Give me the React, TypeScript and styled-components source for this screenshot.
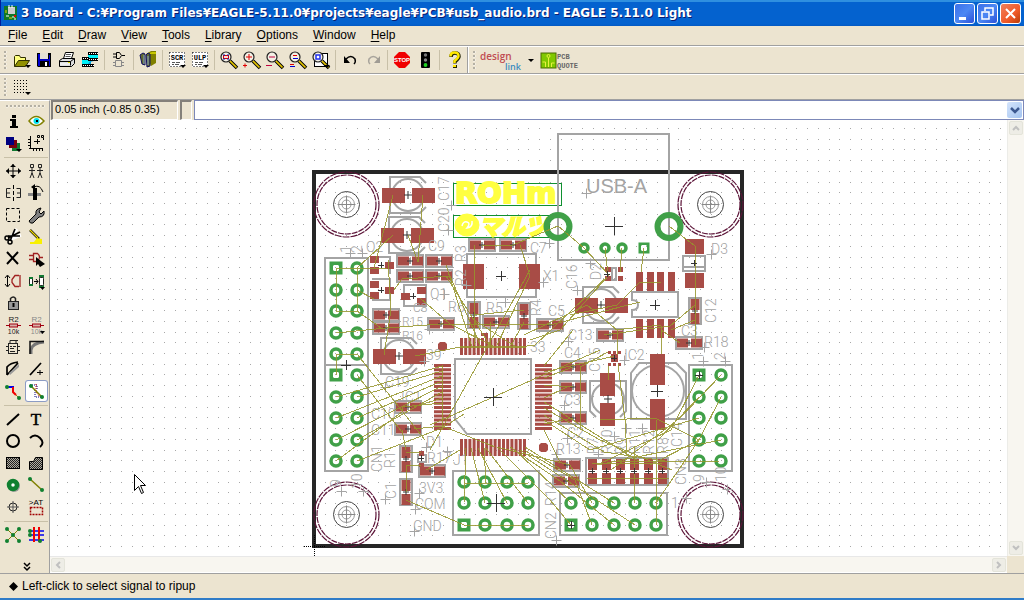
import React from "react";
import styled, { createGlobalStyle, css } from "styled-components";

const GlobalStyle = createGlobalStyle`
  *, *::before, *::after { box-sizing: border-box; }
  html, body, #root { margin: 0; height: 100%; }
  body { font-family: "Liberation Sans", Arial, sans-serif; font-size: 12px; color: #000; overflow: hidden; }
  button, input { font: inherit; color: inherit; }
`;

const face = "#ece4d0";
const edge = "#a0a0a0";

const Window = styled.div`
  display: flex;
  flex-direction: column;
  height: 100%;
  background: ${face};
  border-bottom: 2px solid #2f7cc8;
`;

const TitleBar = styled.header`
  display: flex;
  align-items: center;
  flex: none;
  height: 26px;
  padding: 0 3px 0 3px;
  background: linear-gradient(#2f8fe0 0, #2f8fe0 2px, #0462cf 2px, #0462cf 24px, #0459c2 26px);
  border-left: 1px solid #001c9c;
`;

const Title = styled.h1`
  flex: 1;
  margin: 0 0 0 3px;
  overflow: hidden;
  white-space: nowrap;
  font: bold 12px/20px "DejaVu Sans", Verdana, sans-serif;
  color: #fff;
  text-shadow: 1px 1px 0 #0a1c70;
`;

const WindowButtons = styled.div`
  display: flex;
  gap: 2px;
`;

const WindowButton = styled.button<{ $close?: boolean }>`
  width: 21px;
  height: 21px;
  padding: 0;
  border: 1px solid #fff;
  border-radius: 3px;
  background: ${(p) =>
    p.$close
      ? "linear-gradient(135deg, #f0805c, #f05a28 60%, #b83c08)"
      : "linear-gradient(135deg, #3c70e8, #4c88f4 50%, #2c50d8)"};
  svg { display: block; }
`;

const MenuBar = styled.nav`
  display: flex;
  flex: none;
  gap: 15px;
  height: 20px;
  padding: 0 8px;
  border-bottom: 1px solid ${edge};
`;

const MenuItem = styled.button`
  height: 18px;
  padding: 0;
  border: 0;
  background: none;
  line-height: 18px;
  u { text-underline-offset: 2px; }
`;

const ToolBar = styled.div<{ $height: number }>`
  display: flex;
  align-items: center;
  flex: none;
  height: ${(p) => p.$height}px;
  border-top: 1px solid #fff;
  border-bottom: 1px solid ${edge};
`;

const Grip = styled.div<{ $wide?: boolean }>`
  flex: none;
  background-image: radial-gradient(circle at 1px 1px, #b4b0a4 1px, #fff 1px, transparent 2px);
  background-size: 4px 4px;
  ${(p) =>
    p.$wide
      ? css`width: 39px; height: 3px; margin: 4px 0 2px 6px;`
      : css`width: 3px; height: 18px; margin: 0 3px 0 4px;`}
`;

const ToolButton = styled.button<{ $active?: boolean; $width?: number }>`
  flex: none;
  width: ${(p) => p.$width ?? 23}px;
  height: 22px;
  padding: 0;
  border: 0;
  border-radius: 3px;
  background: ${(p) => (p.$active ? "#fff" : "none")};
  box-shadow: ${(p) => (p.$active ? "inset 0 0 0 1px #8c9cc4" : "none")};
  svg { display: block; }
`;

const Separator = styled.div<{ $horizontal?: boolean }>`
  flex: none;
  ${(p) =>
    p.$horizontal
      ? css`grid-column: 1 / -1; height: 1px; margin: 3px 0 2px 2px; background: #c8c0a8;`
      : css`width: 1px; height: 20px; margin: 0 3px 0 2px; background: #c8c0a8;`}
`;

const BarDivider = styled.div`
  align-self: stretch;
  width: 2px;
  margin-left: 1px;
  background: ${edge};
  border-right: 1px solid #fff;
`;

const Workspace = styled.main`
  display: flex;
  flex: 1;
  min-height: 0;
  border-bottom: 1px solid ${edge};
`;

const ToolBox = styled.aside`
  display: flex;
  flex-direction: column;
  flex: none;
  width: 50px;
  border-top: 1px solid #fff;
  border-right: 1px solid ${edge};
`;

const ToolGrid = styled.div`
  display: grid;
  grid-template-columns: 23px 23px;
  padding-left: 2px;
`;

const MoreButton = styled.button`
  width: 20px;
  height: 12px;
  margin: auto 0 0 16px;
  padding: 0;
  border: 0;
  background: none;
  svg { display: block; margin: auto; }
`;

const Editor = styled.section`
  display: flex;
  flex-direction: column;
  flex: 1;
  min-width: 0;
`;

const CommandRow = styled.div`
  display: flex;
  flex: none;
  height: 20px;
  gap: 2px;
  padding-left: 1px;
`;

const Readout = styled.output<{ $width: number }>`
  flex: none;
  width: ${(p) => p.$width}px;
  padding-left: 2px;
  line-height: 15px;
  font-size: 11px;
  border: 1px solid #fff;
  border-top: 2px solid #84807a;
  border-left: 2px solid #84807a;
  white-space: nowrap;
`;

const CommandBox = styled.div`
  display: flex;
  flex: 1;
  min-width: 0;
  border: 1px solid #7c88b8;
  background: #fff;
`;

const CommandInput = styled.input`
  flex: 1;
  min-width: 0;
  padding: 0 4px;
  border: 0;
  outline: 0;
  background: transparent;
`;

const DropButton = styled.button`
  width: 15px;
  margin: 1px;
  padding: 0;
  border: 0;
  border-radius: 2px;
  background: linear-gradient(135deg, #d4e4fc, #a4c4f0);
  svg { display: block; margin: auto; }
`;

const CanvasRow = styled.div`
  display: flex;
  flex: 1;
  min-height: 0;
`;

const Canvas = styled.div`
  flex: 1;
  min-width: 0;
  overflow: hidden;
  background: #fff;
  > svg { display: block; width: 100%; height: 100%; }
`;

const ScrollTrack = styled.div<{ $vertical?: boolean }>`
  display: flex;
  flex: none;
  justify-content: space-between;
  background: #f8f6f0;
  ${(p) =>
    p.$vertical
      ? css`flex-direction: column; width: 17px; padding: 1px; border-left: 1px solid #ecece8;`
      : css`height: 17px; margin-right: 17px; padding: 1px; border-top: 1px solid #e8e8e8; border-bottom: 1px solid #fff;`}
`;

const ScrollButton = styled.button`
  width: 14px;
  height: 14px;
  padding: 0;
  border: 1px solid #e4e4da;
  border-radius: 2px;
  background: #eeede6;
  svg { display: block; }
`;

const StatusBar = styled.footer`
  display: flex;
  align-items: center;
  flex: none;
  gap: 4px;
  height: 24px;
  padding-left: 9px;
`;

/* ---------- tool icons, each drawn in a 23 x 22 box ---------- */

const DropMark = () => <path d="M14 16h6l-3 3z" fill="#000" />;

const Lens = () => (
  <>
    <path d="M12 12l7 7" stroke="#000" strokeWidth="3.500" />
    <path d="M12 12l6.500 6.500" stroke="#e8c800" strokeWidth="1.700" />
    <circle cx="8" cy="8" r="5" fill="#f4f0e4" stroke="#222" strokeWidth="1.200" />
  </>
);

const Sheet = ({ label }: { label: string }) => (
  <>
    <rect x="3" y="3" width="16" height="15" fill="#fff" />
    <rect x="3.500" y="3.500" width="15" height="14" fill="none" stroke="#000" strokeDasharray="1 2" />
    <path d="M6 13.500h3m1 0h4M6 15.500h2m1 0h4" stroke="#555" />
    <text x="11" y="11" fontSize="7" fontWeight="bold" fontFamily="Liberation Mono, monospace" textAnchor="middle">{label}</text>
    <DropMark />
  </>
);

const Resistor = ({ color }: { color: string }) => (
  <>
    <path d="M4 11.500h15" stroke="#a00010" />
    <rect x="7.500" y="10" width="8" height="3" fill="#d8b0a8" stroke="#a00010" />
    <text x="11.500" y="8" fontSize="8" textAnchor="middle" fill={color}>R2</text>
    <text x="11.500" y="20" fontSize="7" textAnchor="middle" fill={color}>10k</text>
  </>
);

const checks = (
  <defs>
    <pattern id="checks" width="2" height="2" patternUnits="userSpaceOnUse">
      <rect width="2" height="2" fill="#b0aca0" />
      <path d="M0 0h1v1H0zM1 1h1v1H1z" fill="#222" />
    </pattern>
  </defs>
);

const icons: Record<string, React.ReactNode> = {
  open: (
    <>
      <path d="M4.500 17.500V7.500l1-1h4l1 2h5v3" fill="#ffff80" stroke="#303000" />
      <path d="M4.500 17.500l4-6h11l-4 6z" fill="#909000" stroke="#303000" />
      <path d="M15 16h6l-3 3z" />
    </>
  ),
  save: (
    <>
      <path d="M4 4h14v14H5l-1-1z" fill="#000" />
      <path d="M5 5h2v12H5zM16 6h1v11h-1z" fill="#0000d0" />
      <rect x="7" y="4" width="8" height="6" fill="#e4e0d4" />
      <path d="M6 10h10v2H6z" fill="#0000c0" />
      <rect x="12" y="13" width="2" height="4" fill="#fff" />
    </>
  ),
  print: (
    <>
      <path d="M7.500 9.500l2-6h8l-2 6" fill="#fff" stroke="#000" />
      <path d="M10 5.500h5M9.500 7.500h5" stroke="#555" />
      <path d="M3.500 11.500l3-2h12v5l-3 3h-12z" fill="#ddd" stroke="#000" />
      <path d="M3.500 12.500h11v4M14.500 12.500l4-3" stroke="#000" fill="none" />
      <path d="M4 15h10" stroke="#fff" />
      <rect x="12" y="13" width="2" height="1" fill="#e0e000" />
    </>
  ),
  cam: (
    <>
      <path d="M9 3h10v9H9zM3 8h9v10H3z" fill="#00f0f8" />
      <path d="M9 4.500h10M9 10.500h10M3 9.500h7M3 16.500h12" stroke="#000" strokeWidth="3" />
      <path d="M10 4.500h9M10 10.500h9M4 9.500h6M4 16.500h11" stroke="#fff" strokeDasharray="1 1" />
      <path d="M11 12l4 1h-3v2h-3" fill="#00a0e0" />
    </>
  ),
  schematic: (
    <>
      <path d="M8.500 3.500h3l2 3-2 3h-3zM5 5h3M5 8h3M14 6.500h3" fill="none" stroke="#000" />
      <path d="M7.500 11.500h6v6h-6zM5 13.500h2M5 16.500h2M14 13.500h2M14 16.500h2" fill="none" stroke="#888" />
    </>
  ),
  library: (
    <>
      <path d="M9 5l5-3h5v12l-5 3z" fill="#808000" />
      <path d="M10 5l5-2h4v2z" fill="#c8c800" />
      <path d="M3 6l3-2 2 1v11l-3-1zM9 6l2-2 2 1v12l-3 1z" fill="#606830" stroke="#101060" />
      <path d="M7 6v9M11 7v9" stroke="#88a8c8" />
    </>
  ),
  script: <Sheet label="SCR" />,
  ulp: <Sheet label="ULP" />,
  zoomFit: (<><Lens /><rect x="5.500" y="6.500" width="5" height="3" fill="#f8d8d8" stroke="#e00000" /><path d="M5 6h2M9 6h2M5 10h2M9 10h2" stroke="#0020c0" /></>),
  zoomIn: (<><Lens /><path d="M5 8h6M8 5v6M2 16.500h4M4 14.500v4" stroke="#e00000" /></>),
  zoomOut: (<><Lens /><path d="M5 8h6M2 16.500h6" stroke="#c00040" /></>),
  zoomRedraw: (<><Lens /><path d="M6 6.500h4M3 15.500h4" stroke="#e00000" /><path d="M6 9.500h5M3 17.500h5" stroke="#0000d0" /></>),
  zoomSelect: (
    <>
      <rect x="4.500" y="4.500" width="13" height="13" fill="#fff" stroke="#000" />
      <Lens />
      <rect x="6" y="6" width="4" height="4" fill="#fff" stroke="#2030f0" strokeWidth="1.500" />
      <DropMark />
    </>
  ),
  undo: <><path d="M7 10q5-5 9 0 1 3-1 5" fill="none" stroke="#000" strokeWidth="1.500" /><path d="M5 7v7h6z" /></>,
  redo: <><path d="M16 10q-5-5-9 0-1 3 1 5" fill="none" stroke="#a8a49c" strokeWidth="1.500" /><path d="M18 7v7h-6z" fill="#a09c94" /></>,
  stop: (
    <>
      <path d="M8 3h6l5 5v6l-5 5H8l-5-5V8z" fill="#f00000" />
      <text x="11" y="13" fontSize="6" fontWeight="bold" textAnchor="middle" fill="#fff">STOP</text>
    </>
  ),
  traffic: (
    <>
      <rect x="7" y="3" width="9" height="16" rx="1" />
      <circle cx="11.500" cy="6" r="1.700" fill="#777" />
      <circle cx="11.500" cy="11" r="1.700" fill="#888" />
      <circle cx="11.500" cy="16" r="1.900" fill="#20d020" />
    </>
  ),
  help: (
    <>
      <path d="M8 8q0-4 4-4t4 3.500q0 2-4 5v2" fill="none" stroke="#202000" strokeWidth="3.500" />
      <path d="M7.500 7.500q0-4 4-4t4 3.500q0 2-4 5v2" fill="none" stroke="#ffe800" strokeWidth="2.500" />
      <rect x="10" y="16" width="4" height="3" fill="#202000" />
      <rect x="10" y="16" width="3" height="2" fill="#ffe800" />
    </>
  ),
  grid: (
    <>
      {[0, 3, 6, 9, 12].map((y) => <path key={y} d={`M4 ${y + 4.5}h14`} stroke="#000" strokeDasharray="1 2" />)}
      <path d="M15 16h6l-3 3z" />
    </>
  ),
  info: <><rect x="10" y="5" width="4" height="3" /><path d="M8 9h6v7h2v2H8v-2h2v-5H8z" /></>,
  show: (
    <>
      <path d="M4 11q7-9 15 0-8 9-15 0z" fill="#fff" stroke="#808000" strokeWidth="1.500" />
      <circle cx="11.500" cy="11" r="3" fill="#00e0f0" />
      <rect x="11" y="10" width="2" height="2" />
    </>
  ),
  display: <><rect x="10" y="11" width="8" height="8" fill="#107830" /><rect x="7" y="8" width="8" height="8" fill="#780010" /><rect x="4" y="5" width="8" height="8" fill="#000080" /><path d="M14 17h6l-3 3z" /></>,
  mark: (
    <>
      <path d="M5.500 4v13M4 16.500h14M9 9.500h6M12.500 7v5" stroke="#000" fill="none" />
      <path d="M3 7.500h2M3 10.500h2M3 13.500h2M8.500 17v2M11.500 17v2M14.500 17v2M17.500 17v2" stroke="#000" />
      <path d="M12.500 3.500h2v2h-2zM16.500 3.500h2v2h-2zM18.500 6v2" fill="none" stroke="#000" />
    </>
  ),
  move: <><path d="M11 4v14M4 11h15" stroke="#000" /><path d="M8 7l3-3 3 3zM8 15l3 3 3-3zM7 8l-3 3 3 3zM16 8l3 3-3 3z" /></>,
  copy: (
    <>
      {[7, 15].map((x) => (
        <path key={x} d={`M${x - 1.5} 4.500h3v3h-3zM${x} 8v6M${x - 3} 10.500h6M${x} 13l-2 5M${x} 13l2 5`} fill="none" stroke="#222" />
      ))}
    </>
  ),
  mirror: <><path d="M8.500 6.500h-4v9h4M5 11h3M14.500 6.500h4v9h-4M15 11h3" stroke="#222" fill="none" /><path d="M11.500 3v16" stroke="#000" strokeDasharray="4 2" /></>,
  rotate: <><rect x="3" y="11" width="13" height="3" fill="#888" /><rect x="8" y="6" width="4" height="12" /><path d="M9 5q6-3 9 5" fill="none" stroke="#000" /><path d="M10 2v6l-4-3z" /></>,
  group: <rect x="4.500" y="4.500" width="13" height="13" fill="none" stroke="#000" strokeDasharray="3 2" />,
  change: <path d="M4 17l7-7q-1-5 5-6l-2 4 2 2 3-3q1 6-5 6l-6 6q-3 1-4-2z" fill="#808080" stroke="#000" />,
  cut: (
    <>
      <path d="M7 14L19 9M9 11l6-8" stroke="#fff" strokeWidth="3" />
      <path d="M6 12L18 6M18 10L6 10M8 15l5-12" stroke="#000" strokeWidth="1.700" />
      <circle cx="5" cy="12" r="2" fill="none" stroke="#000" strokeWidth="1.500" />
      <circle cx="8" cy="16" r="2" fill="none" stroke="#000" strokeWidth="1.500" />
    </>
  ),
  paste: <><path d="M5 4l9 9" stroke="#000" strokeWidth="2.500" /><path d="M5 4l8 8" stroke="#f0d800" strokeWidth="1.200" /><path d="M12 12l5 1v5H5v-2h4z" fill="#f8f000" /></>,
  delete: <path d="M5 4l11 12M16 4L5 16" stroke="#000" strokeWidth="2" />,
  add: <><path d="M8.500 5.500h4q4 3 0 8h-4zM4 7.500h4M4 11.500h4M15 9.500h3" fill="none" stroke="#a02020" strokeWidth="1.300" /><path d="M11 9v9l2-2 2 3 5-3-4-3z" /></>,
  pinswap: <><path d="M5.500 6v10M3 8l2.500-3L8 8M3 14l2.500 3L8 14" fill="none" stroke="#000" /><path d="M17 5.500h-4l-3 4v3l3 4h4M18 5v12" fill="none" stroke="#a02020" strokeWidth="1.300" /></>,
  replace: <><rect x="4.500" y="8.500" width="3" height="6" fill="#fff" stroke="#222" /><path d="M9 11.500h4M11 9l2 2.500-2 2.500" stroke="#000" fill="none" /><path d="M4 7h4v2H4zM4 14h4v2H4zM14 5h5v3h-5zM14 15h5v3h-5z" fill="#107830" /><rect x="14.500" y="7.500" width="4" height="8" rx="1" fill="#fff" stroke="#222" /><path d="M15 17h5l-2.500 3z" /></>,
  lock: <><path d="M8.500 10V6.500q3-3 5 0V10" fill="none" stroke="#222" strokeWidth="1.500" /><rect x="6.500" y="9.500" width="10" height="8" fill="#999" stroke="#222" /><path d="M11.500 11v4" stroke="#000" strokeWidth="2" /></>,
  name: <Resistor color="#222" />,
  value: <><Resistor color="#888" /><path d="M15 17h5l-2.500 3z" /></>,
  smash: <><rect x="6.500" y="7.500" width="9" height="10" fill="none" stroke="#222" /><path d="M4 10.500h2M4 14.500h2M16 10.500h2M16 14.500h2M8 7V4.500h6V7M8 10.500h2m1 0h3M8 12.500h4M8 15.500h5M8 4.500h8" stroke="#222" fill="none" /></>,
  miter: <><path d="M6 18v-4q1-7 13-8" fill="none" stroke="#777" strokeWidth="3" /><path d="M5 18V5.500h14" fill="none" stroke="#111" strokeWidth="1.500" /></>,
  split: <><path d="M5 17V9q3-4 11-5M5 17L16 5" fill="none" stroke="#000" strokeWidth="1.700" /><path d="M7 15l10-9v3l-9 8z" fill="#999" /></>,
  optimize: <><path d="M5 17L16 5" stroke="#000" strokeWidth="1.700" /><path d="M12 14.500h6M15 12v5" stroke="#000" /></>,
  route: <><path d="M5 7h7" stroke="#0000f0" strokeWidth="2" /><path d="M11 7v5l3 3" stroke="#f00000" strokeWidth="2" fill="none" /><path d="M14 15l3 3" stroke="#909010" /><circle cx="5" cy="7" r="2" fill="#108030" /><circle cx="17" cy="18" r="2" fill="#108030" /></>,
  ripup: <><path d="M5 5h7v5M10 10v7h6" stroke="#000080" strokeDasharray="1 1" fill="none" /><path d="M11 4v8l4 5" stroke="#d00000" strokeDasharray="1 1" fill="none" /><path d="M5 5l13 13" stroke="#808000" strokeWidth="1.500" /><circle cx="6" cy="6" r="2" fill="#108030" /><circle cx="17" cy="17" r="2" fill="#108030" /></>,
  wire: <path d="M5 17L17 6" stroke="#000" strokeWidth="2" />,
  text: <text x="11" y="17" fontSize="17" fontFamily="Liberation Serif, serif" textAnchor="middle" stroke="#000" strokeWidth="0.500">T</text>,
  circle: <circle cx="11" cy="11" r="6" fill="none" stroke="#000" strokeWidth="2" />,
  arc: <path d="M5 8q5-5 10 0t0 9" fill="none" stroke="#000" strokeWidth="2" />,
  rect: <>{checks}<rect x="4.500" y="5.500" width="13" height="11" fill="url(#checks)" stroke="#000" /></>,
  polygon: <path d="M4.500 17.500v-8h4l2-4h7v12z" fill="url(#checks)" stroke="#000" />,
  via: <><circle cx="12" cy="12" r="6" fill="#999" /><circle cx="11" cy="11" r="4" fill="#fff" stroke="#108030" strokeWidth="4.500" /></>,
  signal: <><path d="M5 5l12 11" stroke="#808000" strokeWidth="1.500" /><circle cx="5" cy="5" r="2" fill="#108030" /><circle cx="17" cy="16" r="2" fill="#108030" /></>,
  hole: <><circle cx="11" cy="11" r="4" fill="none" stroke="#222" /><path d="M5 11h12M11 5v12" stroke="#555" /></>,
  attribute: <><text x="11" y="9" fontSize="8" textAnchor="middle">&gt;AT</text><rect x="5.500" y="11.500" width="12" height="7" fill="none" stroke="#a00000" strokeWidth="1.500" strokeDasharray="2 1" /></>,
  ratsnest: <><path d="M5 5l12 12M17 5L5 17" stroke="#808000" />{[[5, 5], [17, 5], [11, 11], [5, 17], [17, 17]].map(([x, y]) => <circle key={`${x}${y}`} cx={x} cy={y} r="2" fill="#108030" />)}</>,
  auto: <><path d="M4 7h15M4 11h15M4 16h15" stroke="#0000f0" strokeWidth="1.500" /><path d="M9 3v15M14 3v15" stroke="#f00000" strokeWidth="2" /><circle cx="5" cy="7" r="2" fill="#108030" /><circle cx="5" cy="11" r="2" fill="#108030" /><circle cx="15" cy="17" r="2" fill="#108030" /></>,
};

function Tool({ name, active }: { name: string; active?: boolean }) {
  return (
    <ToolButton type="button" aria-label={name} aria-pressed={active} $active={active}>
      <svg width="23" height="22" viewBox="0 0 23 22">{icons[name]}</svg>
    </ToolButton>
  );
}

/* ---------- the board ---------- */

const red = "#a84c46";
const green = "#40a048";
const silk = "#a4a4a4";

const pitch = 10.72;
const gridPath = (() => {
  let d = "";
  for (let i = -24; i < 110; i++)
    for (let j = -40; j < 40; j++)
      d += `M${Math.round(314 + i * pitch)} ${Math.round(546 + j * pitch)}h1v1h-1z`;
  return d;
})();

const Cross = ({ x, y, r = 4, color = "#333" }: { x: number; y: number; r?: number; color?: string }) => (
  <path d={`M${x - r} ${y}h${2 * r}M${x} ${y - r}v${2 * r}`} stroke={color} />
);

const Hole = ({ x, y }: { x: number; y: number }) => (
  <g fill="none">
    <circle cx={x} cy={y} r="32.500" stroke="#5c1438" strokeWidth="1.200" strokeDasharray="7 1" />
    <circle cx={x} cy={y} r="29.500" stroke="#5c1438" strokeWidth="1.200" strokeDasharray="6 1" />
    <circle cx={x} cy={y} r="13" stroke="#444" />
    <circle cx={x} cy={y} r="8" stroke="#999" />
    <circle cx={x} cy={y} r="4.500" stroke="#999" />
    <Cross x={x} y={y} r={9} color="#888" />
  </g>
);

const Pad = ({ x, y, square, small }: { x: number; y: number; square?: boolean; small?: boolean }) => {
  const r = small ? 4 : 5;
  return square ? (
    <path fillRule="evenodd" fill={green} d={`M${x - r - 1.5} ${y - r - 1.5}h${2 * r + 3}v${2 * r + 3}h${-2 * r - 3}zM${x - 2} ${y - 3}h4l1 1v4l-1 1h-4l-1 -1v-4z`} />
  ) : (
    <circle cx={x} cy={y} r={r} fill="none" stroke={green} strokeWidth="3.500" />
  );
};

const Chip = ({ x, y, vertical }: { x: number; y: number; vertical?: boolean }) => (
  <g transform={`translate(${x} ${y})${vertical ? " rotate(90)" : ""}`}>
    <rect x="-13" y="-6" width="26" height="12" fill="none" stroke={silk} strokeWidth="2" />
    <rect x="-12" y="-4.500" width="11" height="9" fill={red} />
    <rect x="2" y="-4.500" width="11" height="9" fill={red} />
    <Cross x={0} y={0} r={3} />
  </g>
);

const Electrolytic = ({ x, y, vertical }: { x: number; y: number; vertical?: boolean }) => (
  <g transform={`translate(${x} ${y})${vertical ? " rotate(90)" : ""}`}>
    <path d="M-18-7v-11h30l6 6M-18 8v10h30l6-6" fill="none" stroke={silk} strokeWidth="2" />
    <circle r="16" fill="none" stroke={silk} strokeWidth="2" />
    <rect x="-26" y="-7" width="23" height="15" fill={red} />
    <rect x="4" y="-7" width="23" height="15" fill={red} />
    <Cross x={0} y={0} />
  </g>
);

const leftRows = [268, 290, 311, 333, 354, 375, 397, 418, 440, 461];
const chips: [number, number][] = [
  [410, 261], [439, 261], [410, 276], [439, 276], [482, 245], [513, 245], [386, 315], [386, 328],
  [441, 324], [496, 322], [550, 325], [610, 335], [689, 343], [573, 367], [573, 387], [573, 418],
  [408, 407], [408, 429], [432, 471], [567, 465], [566, 481],
];
const uprightChips: [number, number][] = [[474, 315], [524, 316], [695, 311], [406, 459], [406, 492]];
const resistorArray = [592, 606, 620, 634, 648, 662];
const pins = Array.from({ length: 16 }, (_, i) => i * 4.2);

const smallPads: [number, number, number, number][] = [
  [370, 256, 9, 7], [370, 267, 9, 7], [385, 262, 9, 7],
  [370, 281, 9, 7], [370, 292, 9, 7], [385, 287, 9, 7],
  [401, 293, 9, 7], [417, 287, 9, 7], [417, 298, 9, 7],
  [463, 264, 21, 25], [519, 264, 21, 25],
  [636, 272, 7, 19], [647, 272, 7, 19], [657, 272, 7, 19], [668, 272, 7, 19],
  [636, 319, 7, 19], [647, 319, 7, 19], [657, 319, 7, 19], [668, 319, 7, 19],
  [685, 239, 19, 15], [685, 273, 19, 15],
  [605, 267, 6, 5], [605, 276, 6, 5], [618, 267, 5, 5], [618, 276, 5, 5],
  [608, 351, 3, 3], [613, 351, 3, 3], [618, 351, 3, 3], [608, 363, 3, 3], [613, 363, 3, 3], [618, 363, 3, 3],
  [611, 354, 7, 8], [481, 333, 7, 3], [485, 333, 3, 8], [419, 451, 5, 5], [419, 463, 5, 4],
  [650, 354, 15, 31], [650, 399, 15, 31],
];

const labels: [string, number, number, number?][] = [
  ["C9", 428, 251], ["C7", 530, 253], ["Q2", 366, 252], ["D3", 711, 254], ["X1", 543, 281], ["Q1", 430, 299],
  ["C8", 413, 312, 12], ["R15", 402, 326, 12], ["R16", 402, 340, 12], ["39", 426, 360], ["C19", 385, 387], ["IC1", 401, 402],
  ["C10", 371, 419], ["C11", 371, 435], ["R6", 448, 312], ["R5", 486, 313], ["C5", 548, 316], ["33", 530, 352],
  ["C13", 568, 340], ["C4", 564, 358], ["IC2", 624, 360], ["C3", 564, 405], ["C2", 567, 438], ["C3", 681, 336],
  ["R18", 704, 347], ["R13", 556, 454], ["D1", 426, 447], ["R17", 427, 463], ["J1", 453, 465],
  ["3V3", 419, 493], ["COM", 415, 509], ["GND", 413, 531], ["1", 671, 508],
];
const uprightLabels: [string, number, number][] = [
  ["C17", 449, 201], ["C20", 449, 232], ["1", 351, 253], ["2", 362, 253], ["R3", 466, 262], ["R2", 466, 286],
  ["C16", 577, 289], ["D2", 601, 280], ["R4", 541, 316], ["C15", 600, 372], ["C12", 716, 323], ["1", 703, 360],
  ["2", 725, 360], ["R7", 598, 454], ["R10", 612, 454], ["R9", 626, 454], ["R11", 640, 454], ["R12", 654, 454],
  ["R8", 668, 454], ["C14", 682, 447], ["CN3", 686, 485], ["9", 704, 482], ["10", 726, 482], ["CN2", 556, 539],
  ["R14", 556, 506], ["R1", 395, 468], ["CN1", 382, 472], ["C1", 396, 499], ["9", 341, 487], ["10", 362, 489],
];
const origins: [number, number][] = [
  [451, 205], [448, 230], [350, 253], [362, 253], [586, 193], [549, 243], [711, 254], [590, 263], [577, 290], [543, 282],
  [444, 294], [466, 285], [505, 302], [429, 329], [424, 361], [385, 387], [568, 341], [624, 360], [704, 347], [564, 405],
  [567, 438], [556, 454], [426, 447], [447, 451], [385, 499], [419, 493], [415, 509], [414, 531], [341, 491], [363, 491],
  [556, 540], [686, 498], [706, 482], [727, 489], [703, 361], [725, 361], [598, 454], [614, 436], [626, 428], [642, 428],
];

const airwires = [
  "336,268 387,268", "336,268 336,311 357,311", "357,268 357,311 381,328", "357,268 393,235", "393,195 374,268",
  "423,195 418,262", "408,235 418,262", "357,290 374,299", "336,333 386,328 441,324 550,325 640,302", "336,375 336,354 357,354 425,440",
  "388,260 391,310 384,355", "394,290 402,279 450,276", "336,397 442,366", "357,397 442,371", "336,418 442,376", "357,418 442,381",
  "336,440 442,386", "357,440 442,392", "336,461 402,412 402,407", "357,461 442,428 464,414", "357,375 402,432",
  "402,407 442,403", "414,407 442,398", "414,429 442,426 495,447", "446,265 472,347", "450,276 481,347", "420,298 450,324 495,347",
  "474,245 474,345", "415,356 460,347 526,346", "520,245 530,276 497,345", "446,276 491,347", "474,320 516,347", "490,322 490,347",
  "524,322 510,347", "524,310 474,315", "430,450 530,270", "430,425 600,350", "442,365 442,430", "460,347 526,347",
  "482,245 513,245 558,226 584,248 609,275", "605,248 608,275", "622,248 620,272", "644,248 641,272", "669,226 695,246 695,345",
  "609,275 560,330 530,340", "609,275 535,345 520,347", "640,282 661,282", "640,282 617,305 570,315", "587,305 524,335", "587,305 617,330 617,355",
  "544,366 573,330", "604,335 670,326 695,305", "671,330 695,320", "695,285 695,343", "661,330 680,343", "661,326 661,354",
  "615,330 661,325", "580,367 608,352", "544,372 615,356", "544,378 573,367", "544,385 573,387", "580,367 580,430",
  "567,387 544,398", "608,366 608,380", "618,364 625,420 627,455", "699,375 671,430 597,465", "699,397 658,440", "721,375 680,418 611,470",
  "721,397 699,440 650,465", "721,440 597,465", "721,461 611,462", "699,440 655,418 600,420", "699,461 639,462",
  "544,402 640,462", "544,408 600,440 672,470", "544,415 604,452 672,462", "544,420 590,450 699,418", "573,418 544,424",
  "544,430 560,462", "464,483 528,483", "464,525 528,525", "466,448 464,503", "406,500 464,525", "471,448 485,503",
  "484,448 486,483", "478,448 507,503", "485,447 528,503", "497,447 550,500 571,525", "510,447 560,481 614,525", "497,447 570,465 592,503",
  "515,450 571,503", "520,450 635,525", "525,447 614,503", "524,450 575,480 592,525", "634,445 635,503",
  "657,420 656,503", "699,440 656,503", "656,503 656,525", "587,479 670,478", "592,463 662,463", "426,470 460,450", "406,450 402,430", "406,465 406,492",
  "421,452 406,452", "421,465 406,465",
];

function Board() {
  return (
    <svg role="img" aria-label="Board layout">
      <g transform="translate(-50 -120)">
        <path d={gridPath} fill="#a8a8a8" />
        <g stroke="#109030" fill="none">
          <rect x="453.500" y="183.500" width="108" height="22" />
          <rect x="453.500" y="215.500" width="96" height="22" />
        </g>
        <g fill="#ffff40" stroke="#ffff40">
          <text x="455" y="203" fontSize="29" fontWeight="bold" fontFamily="DejaVu Sans, sans-serif" strokeWidth="2">ROHm</text>
          <ellipse cx="467" cy="225" rx="12" ry="11" />
          <text x="479" y="235" fontSize="23" fontWeight="bold" fontStyle="italic" fontFamily="Noto Sans CJK JP, sans-serif" strokeWidth="2">マルツ</text>
        </g>
        <path d="M462 226q1-5 5-4t0 6q6-1 5-7" fill="none" stroke="#fff" strokeWidth="1.500" />

        <rect x="314" y="172" width="428" height="374" fill="none" stroke="#262626" strokeWidth="4" />
        {[346.5, 710.5].map((x) => [204.5, 514.5].map((y) => <Hole key={`${x}-${y}`} x={x} y={y} />))}

        <g fill="none" stroke={silk} strokeWidth="2">
          <path d="M325 258h43v213h-43zM325 365h43" />
          <path d="M689 365h43v106h-43z" />
          <path d="M453 471h86v64h-86zM560 493h107v42H560z" />
          <path d="M558 134h111v126H558z" />
          <path d="M467 264v-10h69v10M467 289v8h69v-8" />
          <path d="M455 359h76v75h-64l-12-15z" />
          <path d="M632 292h46v25h-46v-7q6 0 6-5t-6-5z" />
          <path d="M683 256h22v15h-22zM683 267h22" />
          <path d="M372 257h18v17M372 279h18v21h-18M404 285h22v21h-22z" />
          <path d="M612 268h4v12h-4zM418 455h8v7h-8z" />
          <path d="M639 363h37l10 10v46h-55v-46z" />
          <circle cx="658" cy="391" r="26" />
          <path d="M586 458h82v27h-82z" />
        </g>

        <Electrolytic x={408} y={195} />
        <Electrolytic x={407} y={235} />
        <Electrolytic x={399} y={356} />
        <Electrolytic x={601} y={305} />
        <Electrolytic x={608} y={399} vertical />
        {chips.map(([x, y]) => <Chip key={`${x}-${y}`} x={x} y={y} />)}
        {uprightChips.map(([x, y]) => <Chip key={`${x}-${y}`} x={x} y={y} vertical />)}

        <g fill={red}>
          {smallPads.map(([x, y, w, h]) => <rect key={`${x}-${y}`} x={x} y={y} width={w} height={h} />)}
          {resistorArray.map((x) => <path key={x} d={`M${x - 4} 459h9v11h-9zM${x - 4} 473h9v11h-9z`} />)}
          {pins.map((p) => (
            <path key={p} d={`M${460 + p} 338h3v17h-3zM${460 + p} 439h3v17h-3zM434 ${364 + p}h17v3h-17zM535 ${364 + p}h17v3h-17z`} />
          ))}
          <path d="M440 342h5l2 2v5l-2 2h-5l-2-2v-5zM541 443h5l2 2v5l-2 2h-5l-2-2v-5z" />
        </g>

        {leftRows.map((y) => [336, 357].map((x) => (
          <Pad key={`${x}-${y}`} x={x} y={y} square={x === 336 && (y === 268 || y === 375)} />
        )))}
        {leftRows.slice(5).map((y) => [699, 721].map((x) => (
          <Pad key={`${x}-${y}`} x={x} y={y} square={x === 699 && y === 375} />
        )))}
        {[482, 503, 525].map((y) => [464, 485, 507, 528].map((x) => (
          <Pad key={`${x}-${y}`} x={x} y={y} square={x === 464 && y === 525} />
        )))}
        {[503, 525].map((y) => [571, 592, 614, 635, 656].map((x) => (
          <Pad key={`${x}-${y}`} x={x} y={y} square={x === 571 && y === 525} />
        )))}
        {[584, 605, 622].map((x) => <Pad key={x} x={x} y={248} small />)}
        <Pad x={644} y={248} square small />
        <g fill="none" stroke={green} strokeWidth="6">
          <circle cx="558" cy="226.500" r="11.500" />
          <circle cx="669" cy="226.500" r="11.500" />
        </g>

        <g fill={silk} fontSize="14" fontWeight="300" fontFamily="Roboto, Liberation Sans, sans-serif">
          {labels.map(([t, x, y, size]) => <text key={`${t}-${x}-${y}`} x={x} y={y} fontSize={size ?? 14}>{t}</text>)}
          {uprightLabels.map(([t, x, y]) => (
            <text key={`${t}-${x}-${y}`} transform={`translate(${x} ${y}) rotate(-90)`}>{t}</text>
          ))}
        </g>
        <text x="586" y="193" fontSize="20" fill={silk}>USB-A</text>
        {origins.map(([x, y]) => <Cross key={`${x}-${y}`} x={x + 0.5} y={y + 0.5} r={5} color={silk} />)}

        <g fill="none" stroke="#96962c" strokeWidth="1" opacity="0.850" shapeRendering="crispEdges">
          {airwires.map((points) => <polyline key={points} points={points} />)}
        </g>

        <g shapeRendering="crispEdges">
          <Cross x={614} y={226} r={9} />
          <Cross x={493} y={397} r={9} />
          <Cross x={496} y={503} r={9} />
          <Cross x={501} y={276} r={5} />
          <Cross x={655} y={305} r={5} />
          <Cross x={657} y={391} r={6} />
          <Cross x={346} y={365} r={5} />
          <Cross x={699} y={375} />
          <Cross x={571} y={525} />
          <Cross x={381} y={265} r={3} />
          <Cross x={381} y={290} r={3} />
          <Cross x={413} y={296} r={3} />
          <Cross x={607} y={274} r={3} />
          <Cross x={614} y={358} r={3} />
          <Cross x={694} y={263} r={3} />
          <Cross x={421} y={458} r={3} />
          {resistorArray.map((x) => <Cross key={x} x={x} y={471} r={3} />)}
          <path d="M304 546.500h22M314.500 535v22" stroke="#000" strokeDasharray="1 1" />
        </g>
        <path d="M134.500 474.500v16l4-4 3 7 2-1-3-7h5z" fill="#fff" stroke="#000" />
      </g>
    </svg>
  );
}

/* ---------- the application window ---------- */

const menus = ["File", "Edit", "Draw", "View", "Tools", "Library", "Options", "Window", "Help"];
const actionGroups = [
  ["open", "save", "print", "cam"],
  ["schematic"],
  ["library"],
  ["script", "ulp"],
  ["zoomFit", "zoomIn", "zoomOut", "zoomRedraw", "zoomSelect"],
  ["undo", "redo"],
  ["stop", "traffic"],
  ["help"],
];
const toolGroups = [
  ["info", "show", "display", "mark"],
  ["move", "copy", "mirror", "rotate", "group", "change", "cut", "paste", "delete", "add", "pinswap", "replace",
    "lock", "", "name", "value", "smash", "miter", "split", "optimize", "route", "ripup"],
  ["wire", "text", "circle", "arc", "rect", "polygon", "via", "signal", "hole", "attribute"],
  ["ratsnest", "auto"],
];

const arrows = { up: "M3 8l3-3 3 3", down: "M3 4l3 3 3-3", left: "M8 3L5 6l3 3", right: "M4 3l3 3-3 3" };

function Arrow({ to }: { to: keyof typeof arrows }) {
  return (
    <ScrollButton type="button" aria-label={`Scroll ${to}`}>
      <svg width="12" height="12"><path d={arrows[to]} fill="none" stroke="#c0c0c0" strokeWidth="2" /></svg>
    </ScrollButton>
  );
}

export default function App() {
  return (
    <Window>
      <GlobalStyle />
      <TitleBar>
        <svg width="14" height="16" aria-hidden="true">
          <rect y="1" width="13" height="14" fill="#107828" />
          <path d="M4 2h7v7H4z" fill="#ccc" />
          <path d="M5 0v3M8 0v3M2 11h3M8 12h3M11 13v2" stroke="#fff" />
          <path d="M2 5v3M5 13h3" stroke="#f0d000" />
          <rect x="10" y="10" width="2" height="2" fill="#e00000" />
        </svg>
        <Title>3 Board - C:¥Program Files¥EAGLE-5.11.0¥projects¥eagle¥PCB¥usb_audio.brd - EAGLE 5.11.0 Light</Title>
        <WindowButtons>
          <WindowButton type="button" aria-label="Minimize">
            <svg width="19" height="19"><path d="M4 13h7v3H4z" fill="#fff" /></svg>
          </WindowButton>
          <WindowButton type="button" aria-label="Restore">
            <svg width="19" height="19"><path d="M7 7V4h8v7h-3M4 8h7v7H4z" fill="none" stroke="#fff" strokeWidth="1.500" /></svg>
          </WindowButton>
          <WindowButton type="button" aria-label="Close" $close>
            <svg width="19" height="19"><path d="M5 5l9 9M14 5l-9 9" stroke="#fff" strokeWidth="2" /></svg>
          </WindowButton>
        </WindowButtons>
      </TitleBar>

      <MenuBar>
        {menus.map((m) => (
          <MenuItem key={m} type="button"><u>{m[0]}</u>{m.slice(1)}</MenuItem>
        ))}
      </MenuBar>

      <ToolBar $height={28}>
        <Grip />
        {actionGroups.map((group, i) => (
          <React.Fragment key={group[0]}>
            {i > 0 && <Separator />}
            {group.map((name) => <Tool key={name} name={name} />)}
          </React.Fragment>
        ))}
        <BarDivider />
        <Grip />
        <ToolButton type="button" $width={60} aria-label="designlink">
          <svg width="60" height="22">
            <text x="1" y="11" fontSize="10" fontFamily="Open Sans, sans-serif" fontWeight="600" fill="#c04c50">design</text>
            <text x="26" y="21" fontSize="9" fontFamily="Open Sans, sans-serif" fontWeight="600" fill="#3c8cc0">link</text>
            <path d="M49 10h6l-3 3z" />
          </svg>
        </ToolButton>
        <ToolButton type="button" $width={40} aria-label="PCB quote">
          <svg width="40" height="22">
            <rect x="2" y="4" width="15" height="15" fill="#80c800" stroke="#4c6c00" />
            <path d="M9.500 18V9M6.500 18v-5h-3M12.500 18v-4h3" fill="none" stroke="#e8f040" />
            <circle cx="9.500" cy="7" r="1.500" fill="none" stroke="#e8f040" />
            <text x="18" y="10" fontSize="7" fontWeight="bold" fontFamily="Liberation Mono, monospace" fill="#666">PCB</text>
            <text x="18" y="19" fontSize="7" fontWeight="bold" fontFamily="Liberation Mono, monospace" fill="#666">QUOTE</text>
          </svg>
        </ToolButton>
      </ToolBar>

      <ToolBar $height={26}>
        <Grip />
        <Tool name="grid" />
      </ToolBar>

      <Workspace>
        <ToolBox>
          <Grip $wide />
          <ToolGrid>
            {toolGroups.map((group, i) => (
              <React.Fragment key={group[0]}>
                {i > 0 && <Separator $horizontal />}
                {group.map((name) => (name ? <Tool key={name} name={name} active={name === "ripup"} /> : <span key="gap" />))}
              </React.Fragment>
            ))}
          </ToolGrid>
          <MoreButton type="button" aria-label="More tools">
            <svg width="9" height="10"><path d="M2 1l3 3 3-3M2 5l3 3 3-3" fill="none" stroke="#000" strokeWidth="1.500" /></svg>
          </MoreButton>
        </ToolBox>

        <Editor>
          <CommandRow>
            <Readout $width={127}>0.05 inch (-0.85 0.35)</Readout>
            <Readout $width={12} />
            <CommandBox>
              <CommandInput type="text" aria-label="Command" />
              <DropButton type="button" aria-label="Command history">
                <svg width="11" height="10"><path d="M2 3l4 4 4-4" fill="none" stroke="#3c5890" strokeWidth="2.500" /></svg>
              </DropButton>
            </CommandBox>
          </CommandRow>
          <CanvasRow>
            <Canvas><Board /></Canvas>
            <ScrollTrack $vertical><Arrow to="up" /><Arrow to="down" /></ScrollTrack>
          </CanvasRow>
          <ScrollTrack><Arrow to="left" /><Arrow to="right" /></ScrollTrack>
        </Editor>
      </Workspace>

      <StatusBar>
        <svg width="9" height="9" aria-hidden="true"><path d="M4.500 0L9 4.500 4.500 9 0 4.500z" /></svg>
        <span>Left-click to select signal to ripup</span>
      </StatusBar>
    </Window>
  );
}
